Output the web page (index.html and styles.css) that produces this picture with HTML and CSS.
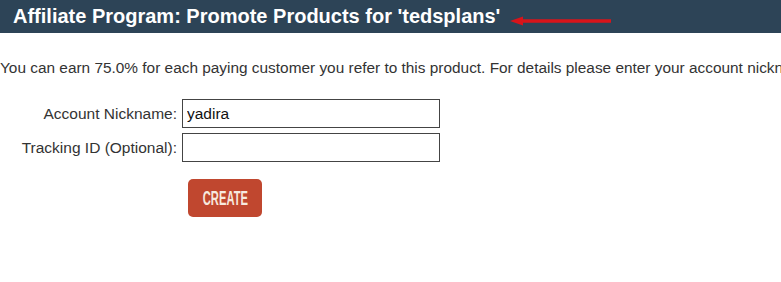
FILE: index.html
```html
<!DOCTYPE html>
<html>
<head>
<meta charset="utf-8">
<link rel="stylesheet" href="styles.css">
</head>
<body>
<div class="header">
  <h1 class="title">Affiliate Program: Promote Products for 'tedsplans'</h1>
  <svg class="arrow" width="104" height="12" viewBox="0 0 104 12">
    <path d="M12 6 L102 6" stroke="#d8141a" stroke-width="3.5" fill="none"/>
    <path d="M1 6 L14 1.5 L14 10.5 Z" fill="#d8141a"/>
  </svg>
</div>
<p class="intro">You can earn 75.0% for each paying customer you refer to this product. For details please enter your account nickname below.</p>
<form class="form">
  <div class="row">
    <label class="label">Account Nickname:</label>
    <input class="field" type="text" value="yadira">
  </div>
  <div class="row">
    <label class="label">Tracking ID (Optional):</label>
    <input class="field" type="text" value="">
  </div>
  <div class="actions">
    <button class="btn" type="button"><span class="btn-text">CREATE</span></button>
  </div>
</form>
</body>
</html>
```
FILE: styles.css
```css
html, body {
  margin: 0;
  padding: 0;
  background: #ffffff;
  overflow: hidden;
}
body {
  font-family: "Liberation Sans", Arial, sans-serif;
  color: #333333;
  width: 781px;
}
.header {
  background: #2d4457;
  height: 33px;
  display: flex;
  align-items: center;
  padding-left: 13px;
  box-sizing: border-box;
}
.title {
  margin: 0;
  font-size: 20px;
  font-weight: bold;
  color: #ffffff;
  white-space: nowrap;
}
.arrow {
  margin-left: 9px;
  margin-top: 9px;
}
.intro {
  margin: 26px 0 0 0;
  font-size: 15.4px;
  white-space: nowrap;
  overflow: hidden;
  line-height: 18px;
}
.form {
  margin-top: 22px;
}
.row {
  display: flex;
  align-items: center;
  height: 29px;
  margin-bottom: 5px;
}
.label {
  width: 177px;
  text-align: right;
  font-size: 15.5px;
  color: #333333;
}
.field {
  margin: 0 0 0 5px;
  width: 258px;
  height: 29px;
  box-sizing: border-box;
  border: 1px solid #444444;
  padding: 0 4px;
  font-family: "Liberation Sans", Arial, sans-serif;
  font-size: 15.5px;
  color: #111111;
  background: #ffffff;
}
.actions {
  padding-left: 188px;
  margin-top: 17px;
}
.btn {
  width: 74px;
  height: 38px;
  background: #c0472f;
  border: none;
  border-radius: 5px;
  padding: 0;
  display: flex;
  align-items: center;
  justify-content: center;
}
.btn-text {
  display: inline-block;
  color: #f7e9de;
  font-family: "Liberation Sans", Arial, sans-serif;
  font-weight: bold;
  font-size: 20px;
  transform: scaleX(0.56);
  margin-top: 1px;
}
```
